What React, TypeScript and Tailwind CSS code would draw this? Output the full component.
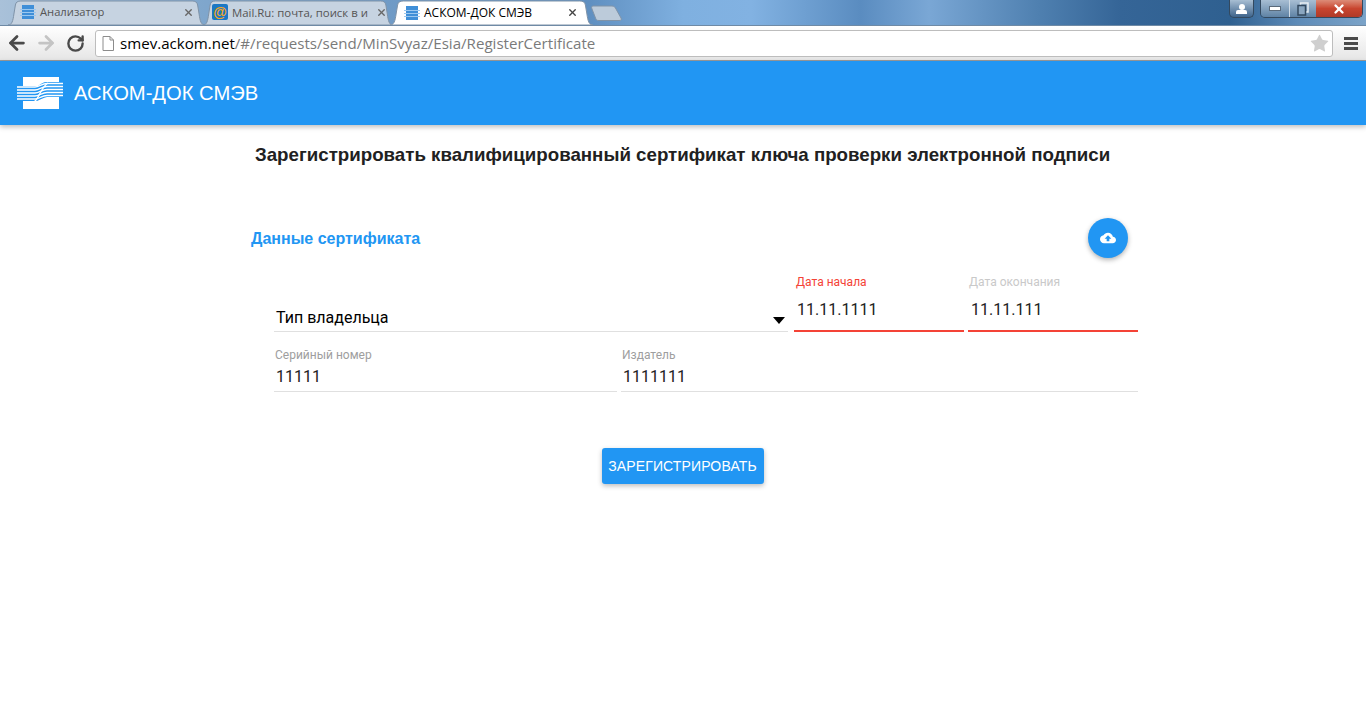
import React from 'react';
import { ArrowLeft, ArrowRight, RotateCw, X, Star } from 'lucide-react';

const sans = { fontFamily: '"Liberation Sans", Arial, sans-serif' };
const roboto = { fontFamily: 'Roboto, sans-serif' };

const Logo = ({ className }: { className: string }) => (
  <svg viewBox="0 0 46 32" className={className}>
    <path d="M6 0H42V5H30C26 5 24 7 21 9H6Z" fill="#fff" />
    <path d="M6 24H20C24 22 26 21 30 20H42V32H6Z" fill="#fff" />
    <g stroke="#fff" strokeWidth="1.300" fill="none">
      {[10, 13, 16, 19, 22].map((y) => (
        <path key={y} d={`M0 ${y}H18C22 ${y} 25 ${y - 3.5} 30 ${y - 3.5}H46`} />
      ))}
      <path d="M17 25C22 22 24 10 31 6" />
    </g>
  </svg>
);

const Favicon = () => (
  <svg viewBox="0 0 16 14" className="w-4 h-[14px] shrink-0">
    <rect x="2" y="0" width="12" height="14" fill="#3f8fd8" />
    <g stroke="#9cc8ef" strokeWidth="1">
      <path d="M0 4.500H16M0 7.500H16M0 10.500H16" />
    </g>
  </svg>
);

const Tab = ({ title, icon, active, className, titleClass }: { title: string; icon: React.ReactNode; active?: boolean; className: string; titleClass: string }) => (
  <div className={`relative h-[25px] flex items-center shrink-0 ${className}`}>
    <svg viewBox="0 0 200 25" preserveAspectRatio="none" className="absolute inset-0 w-full h-full">
      <path
        d="M0 25C4 25 5 21 6 14L7.500 5C8 2 10 1 13 1H187C190 1 192 2 192.500 5L194 14C195 21 196 25 200 25Z"
        fill={active ? '#ffffff' : '#c6d3e1'}
        stroke="#7f93a8"
        strokeWidth="1"
        vectorEffect="non-scaling-stroke"
      />
    </svg>
    <div className="relative flex items-center w-full">
      {icon}
      <span className={`ml-[4px] whitespace-nowrap flex-1 ${titleClass}`} style={{ fontFamily: '"Open Sans", sans-serif' }}>{title}</span>
      <X size={11} strokeWidth={3} className={active ? 'text-[#444] shrink-0' : 'text-[#666] shrink-0'} />
    </div>
  </div>
);

const Field = ({ label, value, labelClass, lineClass, className, valueClass, lineGap }: { label: string; value: string; labelClass: string; lineClass: string; className: string; valueClass: string; lineGap: string }) => (
  <div className={`flex flex-col justify-end ${className}`}>
    <span className={`text-[12px] leading-[14px] ${labelClass}`} style={roboto}>{label}</span>
    <span className={`text-[16px] leading-[24px] text-[#212121] ${valueClass}`} style={roboto}>{value}</span>
    <div className={`w-full ${lineGap} ${lineClass}`} />
  </div>
);

export default function App() {
  return (
    <div className="min-h-[728px] bg-white" style={sans}>
      {/* browser chrome */}
      <div className="relative h-[26px] flex pl-[8px] border-b border-[#6f8aa5] bg-[linear-gradient(90deg,#a9c1d9_0%,#7fa6cc_15%,#5f8fc0_43%,#7fb0e0_50%,#82b2e2_55%,#5a8cc0_63%,#7aa7d5_68%,#4f80b0_76%,#356597_82%,#2f6090_90%,#5d8bb8_95%,#7ba3c8_100%)] overflow-hidden">
        <div className="flex items-start">
          <Tab title="Анализатор" className="w-[197px] pl-[12px] pr-[11px]" titleClass="text-[11.200px] text-[#555]" icon={<Favicon />} />
          <Tab
            title="Mail.Ru: почта, поиск в и"
            className="w-[190px] -ml-[2px] pl-[9px] pr-[6px]"
            titleClass="text-[11.400px] text-[#555]"
            icon={<span className="w-4 h-4 shrink-0 bg-[#1b78c4] rounded-[2px] flex items-center justify-center text-[#f5a623] text-[14px] font-bold leading-none">@</span>}
          />
          <Tab title="АСКОМ-ДОК СМЭВ" active className="w-[203px] -ml-[3px] pl-[14px] pr-[15px]" titleClass="text-[12px] text-black" icon={<Favicon />} />
          <svg viewBox="0 0 34 16" className="w-[34px] h-[16px] -ml-[3px] mt-[5px]">
            <path d="M3 1H22C24 1 25 2 26 4L31 13C32 15 31 15.500 29 15.500H9C7 15.500 6 15 5.500 13L2 4C1 2 2 1 3 1Z" fill="#bccbda" stroke="#7f93a8" />
          </svg>
        </div>
        <div className="absolute right-[3px] top-0 flex items-start gap-[6px]">
          <div className="w-[25px] h-[18px] rounded-b-[5px] border border-t-0 border-[#33495f] bg-gradient-to-b from-[#a8bed3] to-[#3f658c] flex flex-col items-center justify-center">
            <span className="w-[6px] h-[6px] rounded-full bg-white" />
            <span className="w-[11px] h-[4px] rounded-t-[2px] bg-white" />
          </div>
          <div className="flex h-[18px] rounded-b-[5px] border border-t-0 border-[#33495f] overflow-hidden">
            <div className="w-[29px] bg-gradient-to-b from-[#a8bed3] to-[#5f83a5] flex items-center justify-center border-r border-[#cfdbe6]">
              <span className="w-[12px] h-[5px] bg-white border border-[#5a6a7a]" />
            </div>
            <div className="w-[26px] bg-gradient-to-b from-[#a8bed3] to-[#5f83a5] flex items-center justify-center">
              <svg viewBox="0 0 12 14" className="w-3 h-[14px]" fill="none" stroke="#33495f" strokeWidth="1.500">
                <rect x="3.500" y="1" width="7.500" height="9" stroke="#e8eef4" />
                <rect x="1" y="3.500" width="7.500" height="9.500" fill="#8aa6c0" />
              </svg>
            </div>
            <div className="w-[46px] bg-gradient-to-b from-[#dc8c78] via-[#c8452f] to-[#b03a28] flex items-center justify-center">
              <X size={14} strokeWidth={4} className="text-white" />
            </div>
          </div>
        </div>
      </div>

      <div className="h-[35px] flex items-center pl-[6px] pr-[8px] bg-gradient-to-b from-white to-[#e6e6e6] border-b border-[#9a9a9a]">
        <ArrowLeft size={22} strokeWidth={3} className="text-[#4a4a4a]" />
        <ArrowRight size={22} strokeWidth={3} className="ml-[7px] text-[#c4c4c4]" />
        <RotateCw size={19} strokeWidth={3} className="ml-[9px] text-[#4a4a4a]" />
        <div className="ml-[10px] flex-1 h-[27px] flex items-center bg-white border border-[#bdbdbd] rounded-[3px] pl-[6px] pr-[2px]">
          <svg viewBox="0 0 12 15" className="w-[12px] h-[15px] shrink-0">
            <path d="M1 .500H8L11.500 4V14.500H1Z M8 .500V4H11.500" fill="#fff" stroke="#8c8c8c" />
          </svg>
          <span className="ml-[6px] text-[15.100px] whitespace-nowrap flex-1 text-[#7a7a7a]" style={{ fontFamily: '"Open Sans", sans-serif' }}>
            <span className="text-black">smev.ackom.net</span>/#/requests/send/MinSvyaz/Esia/RegisterCertificate
          </span>
          <Star size={21} fill="#cfcfcf" strokeWidth={0} />
        </div>
        <div className="ml-[11px] w-[14px] flex flex-col gap-[2px]">
          <span className="h-[3px] bg-[#4a4a4a]" />
          <span className="h-[3px] bg-[#4a4a4a]" />
          <span className="h-[3px] bg-[#4a4a4a]" />
        </div>
      </div>

      {/* app bar */}
      <header className="h-[64px] bg-[#2196f3] flex items-center pl-[17px] shadow-[0_2px_5px_rgba(0,0,0,0.26)]">
        <Logo className="w-[46px] h-[32px]" />
        <span className="ml-[11px] text-[20.200px] text-white">АСКОМ-ДОК СМЭВ</span>
      </header>

      <main className="ml-[251px] w-[887px]">
        <h1 className="pt-[18px] pl-[4px] text-[18.720px] leading-[24px] font-bold text-[#212121] whitespace-nowrap">
          Зарегистрировать квалифицированный сертификат ключа проверки электронной подписи
        </h1>

        <div className="mt-[51px] flex items-center justify-between pr-[10px]">
          <h2 className="mt-[2px] text-[16px] font-bold text-[#2196f3]">Данные сертификата</h2>
          <button className="w-10 h-10 rounded-full bg-[#2196f3] flex items-center justify-center shadow-[0_2px_5px_rgba(0,0,0,0.3)]">
            <svg viewBox="0 0 24 24" className="w-[16px] h-[16px]" fill="#fff">
              <path d="M19.350 10.040C18.670 6.590 15.640 4 12 4 9.110 4 6.600 5.640 5.350 8.040 2.340 8.360 0 10.910 0 14c0 3.310 2.690 6 6 6h13c2.760 0 5-2.240 5-5 0-2.640-2.050-4.780-4.650-4.960zM14 13v4h-4v-4H7l5-5 5 5h-3z" />
            </svg>
          </button>
        </div>

        <div className="mt-[17px] pl-[23px] flex gap-[4px] items-end">
          <div className="w-[514px] mr-[2px] flex flex-col">
            <div className="flex items-end justify-between pl-[2px] pr-[3px]">
              <span className="text-[16px] leading-[24px] text-black" style={roboto}>Тип владельца</span>
              <span className="mb-[6px] w-0 h-0 border-l-[6px] border-r-[6px] border-t-[7px] border-l-transparent border-r-transparent border-t-black" />
            </div>
            <div className="mt-[1px] h-px bg-[#e0e0e0]" />
          </div>
          <Field label="Дата начала" value="11.11.1111" labelClass="pl-[2px] text-[#f44336]" valueClass="pl-[3px] mt-[9px]" lineGap="mt-[8px]" lineClass="h-[2px] bg-[#f44336]" className="w-[170px]" />
          <Field label="Дата окончания" value="11.11.111" labelClass="pl-[1px] text-[#c9c9c9]" valueClass="pl-[3px] mt-[9px]" lineGap="mt-[8px]" lineClass="h-[2px] bg-[#f44336]" className="w-[170px]" />
        </div>

        <div className="mt-[16px] pl-[23px] flex gap-[4px]">
          <Field label="Серийный номер" value="11111" labelClass="pl-[1px] text-[#9e9e9e]" valueClass="pl-[2px] mt-[3px]" lineGap="mt-[2px]" lineClass="h-px bg-[#e0e0e0]" className="w-[343px]" />
          <Field label="Издатель" value="1111111" labelClass="pl-[1px] text-[#9e9e9e]" valueClass="pl-[2px] mt-[3px]" lineGap="mt-[2px]" lineClass="h-px bg-[#e0e0e0]" className="w-[517px]" />
        </div>

        <div className="mt-[56px] flex justify-center pr-[24px]">
          <button className="w-[162px] h-[36px] rounded-[3px] bg-[#2196f3] text-white text-[14px] tracking-[0.130px] shadow-[0_2px_5px_rgba(0,0,0,0.26)]">
            ЗАРЕГИСТРИРОВАТЬ
          </button>
        </div>
      </main>
    </div>
  );
}
